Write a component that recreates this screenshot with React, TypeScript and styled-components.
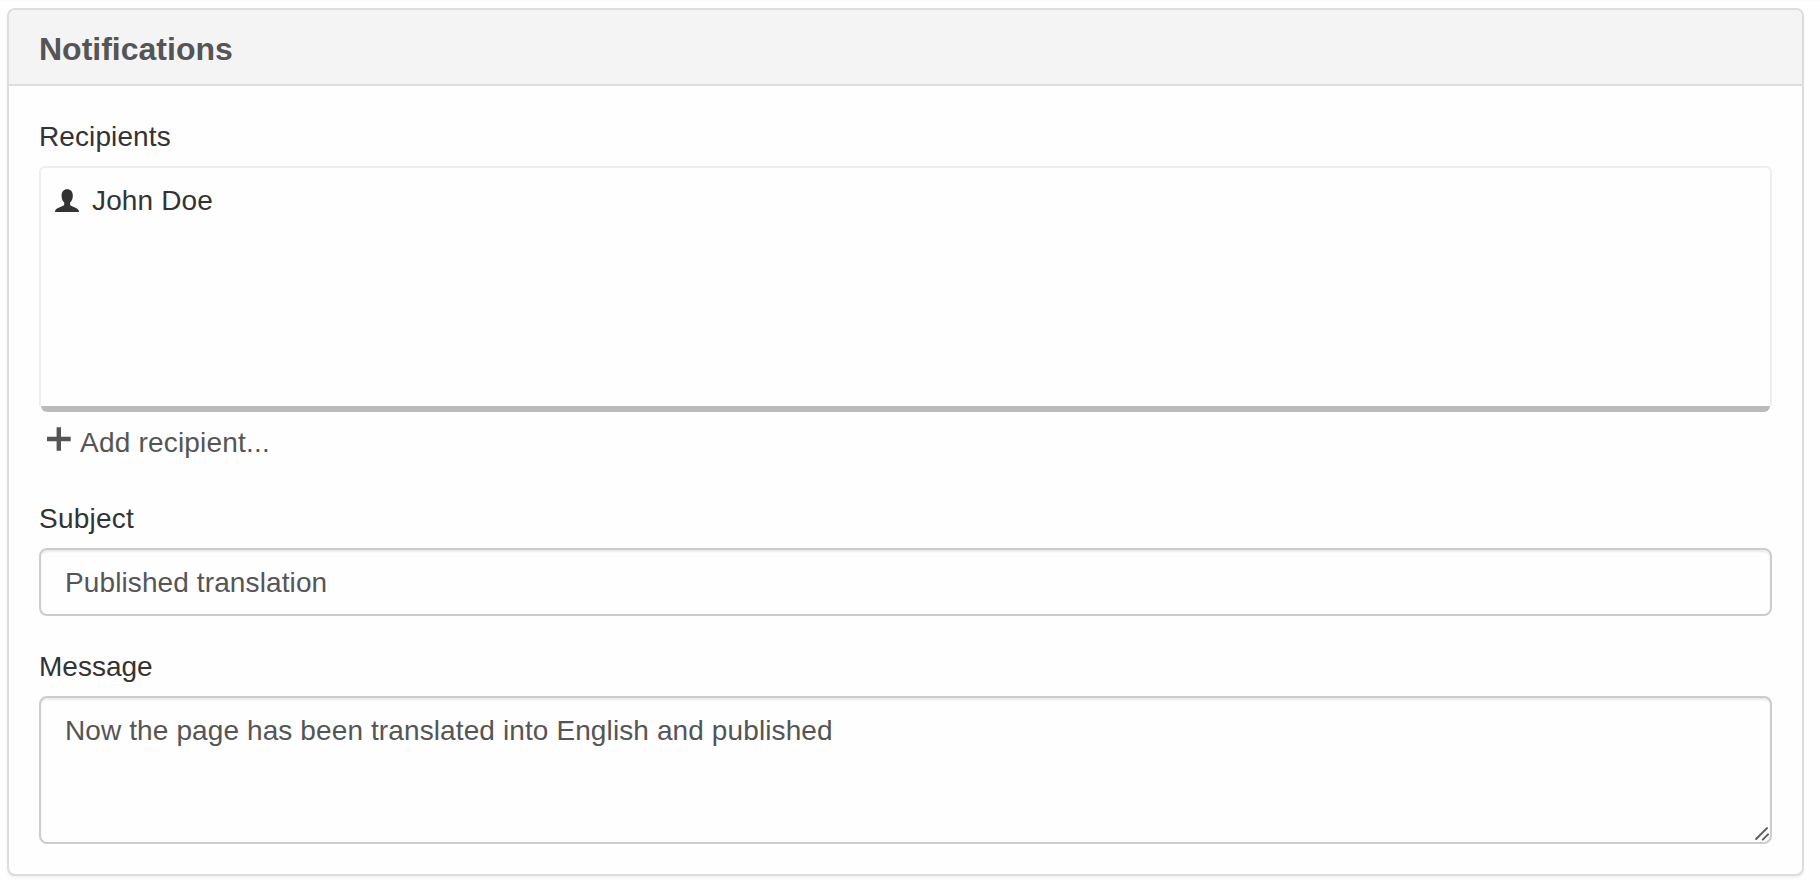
import React from 'react';
import styled, { createGlobalStyle, css } from 'styled-components';

const GlobalStyle = createGlobalStyle`
  *,
  *::before,
  *::after {
    box-sizing: border-box;
  }

  body {
    margin: 0;
    background: #fefefe;
    color: #333;
    font-family: 'Liberation Sans', Arial, sans-serif;
    font-size: 28px;
    line-height: 40px;
  }
`;

const Page = styled.main`
  padding: 7px 16px 4px 7px;
  border-top: 1px solid #fbfbfb;
`;

const Panel = styled.section`
  height: 868px;
  border: 2px solid #ddd;
  border-radius: 8px;
  background: #fefefe;
  box-shadow: 0 2px 2px rgba(0, 0, 0, 0.05);
`;

const PanelHeading = styled.header`
  height: 76px;
  padding: 21px 30px 0;
  border-bottom: 2px solid #ddd;
  border-radius: 6px 6px 0 0;
  background: #f4f4f4;
`;

const PanelTitle = styled.h3`
  margin: 0;
  color: #555;
  font-size: 32px;
  font-weight: 700;
  line-height: 36px;
`;

const PanelBody = styled.div`
  display: flex;
  flex-direction: column;
  gap: 30px;
  padding: 30px;
`;

const FormGroup = styled.div`
  display: flex;
  flex-direction: column;
`;

const Label = styled.label<{ $spacing?: number }>`
  padding-top: 1px;
  margin-bottom: 9px;
  letter-spacing: ${(props) => props.$spacing ?? 0}px;
`;

const RecipientBox = styled.div`
  height: 240px;
  padding: 13px 14px 0;
  border: 2px solid #eee;
  border-bottom: 0;
  border-radius: 6px 6px 0 0;
`;

const Recipient = styled.div`
  display: flex;
  align-items: center;
  letter-spacing: 0.15px;
`;

const UserIcon = styled.svg`
  width: 24px;
  height: 24px;
  margin: -1px 13px 0 0;
  fill: #333;
`;

const ResizeBar = styled.div`
  height: 6px;
  margin: 0 2px;
  border-radius: 0 0 6px 6px;
  background: #bbb;
`;

const AddButton = styled.button`
  display: flex;
  align-items: center;
  align-self: flex-start;
  margin: 11px 0 5px;
  padding: 0 8px;
  border: 0;
  background: none;
  color: #555;
  font: inherit;
  letter-spacing: 0.2px;
  cursor: pointer;
`;

const PlusIcon = styled.svg`
  width: 24px;
  height: 24px;
  margin: -8px 9px 0 0;
  fill: #555;
`;

const control = css`
  display: block;
  width: 100%;
  margin: 0;
  padding: 13px 24px 11px;
  border: 2px solid #ccc;
  border-radius: 8px;
  outline: 0;
  background: #fefefe;
  box-shadow: inset 0 2px 2px rgba(0, 0, 0, 0.075);
  color: #555;
  font: inherit;
  letter-spacing: 0.11px;
`;

const TextInput = styled.input`
  ${control}
  height: 68px;
`;

const TextAreaWrapper = styled.div`
  position: relative;
`;

const TextArea = styled.textarea`
  ${control}
  height: 148px;
  overflow: hidden;
  resize: none;
`;

const ResizeGrip = styled.svg`
  position: absolute;
  right: 3px;
  bottom: 3px;
  width: 14px;
  height: 14px;
  stroke: #5c5c5c;
  stroke-width: 2;
  stroke-linecap: round;
  pointer-events: none;
`;

const recipients = ['John Doe'];

function Notifications() {
  return (
    <Panel>
      <PanelHeading>
        <PanelTitle>Notifications</PanelTitle>
      </PanelHeading>
      <PanelBody>
        <FormGroup>
          <Label as="div" $spacing={0.1}>
            Recipients
          </Label>
          <RecipientBox>
            {recipients.map((name) => (
              <Recipient key={name}>
                <UserIcon viewBox="0 0 24 24" aria-hidden="true">
                  <path d="M12.2 0.3C15.7 0.3 17.8 2.8 17.8 6.5C17.8 9.6 16.9 12.2 15.1 13.5V15.5C15.1 16.4 15.7 16.7 16.6 17.1L21.5 19.2C23.2 20 23.9 21.1 24 23H0C0.1 21.1 0.8 20 2.5 19.2L7.5 17.1C8.5 16.7 9.2 16.4 9.2 15.5V13.5C7.4 12.2 6.6 9.6 6.6 6.5C6.6 2.8 8.7 0.3 12.2 0.3Z" />
                </UserIcon>
                {name}
              </Recipient>
            ))}
          </RecipientBox>
          <ResizeBar />
          <AddButton type="button">
            <PlusIcon viewBox="0 0 24 24" aria-hidden="true">
              <path d="M9.6 0.3H14V9.7H23.7V14.3H14V23.7H9.6V14.3H0V9.7H9.6Z" />
            </PlusIcon>
            Add recipient...
          </AddButton>
        </FormGroup>
        <FormGroup>
          <Label htmlFor="subject" $spacing={0.25}>
            Subject
          </Label>
          <TextInput id="subject" defaultValue="Published translation" />
        </FormGroup>
        <FormGroup>
          <Label htmlFor="message">Message</Label>
          <TextAreaWrapper>
            <TextArea
              id="message"
              spellCheck={false}
              defaultValue="Now the page has been translated into English and published"
            />
            <ResizeGrip viewBox="0 0 14 14" aria-hidden="true">
              <path d="M1.1 12L12 1.1M7.8 12.6L13 7.4" />
            </ResizeGrip>
          </TextAreaWrapper>
        </FormGroup>
      </PanelBody>
    </Panel>
  );
}

const App = () => (
  <>
    <GlobalStyle />
    <Page>
      <Notifications />
    </Page>
  </>
);

export default App;
